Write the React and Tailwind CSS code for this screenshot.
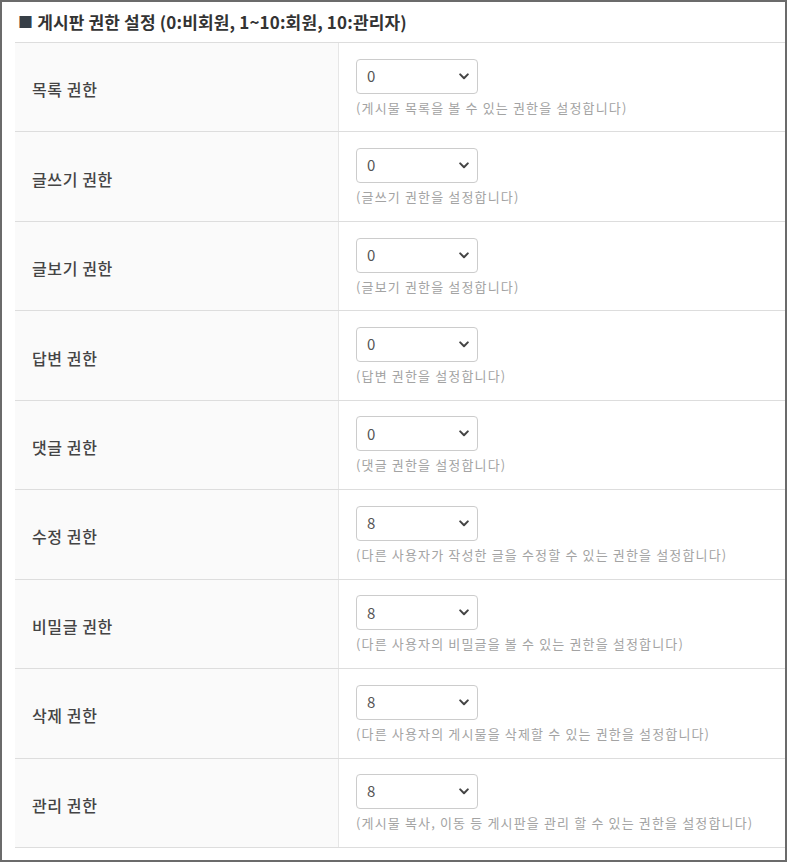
const rows = [
  ["목록 권한", "0", "(게시물 목록을 볼 수 있는 권한을 설정합니다)"],
  ["글쓰기 권한", "0", "(글쓰기 권한을 설정합니다)"],
  ["글보기 권한", "0", "(글보기 권한을 설정합니다)"],
  ["답변 권한", "0", "(답변 권한을 설정합니다)"],
  ["댓글 권한", "0", "(댓글 권한을 설정합니다)"],
  ["수정 권한", "8", "(다른 사용자가 작성한 글을 수정할 수 있는 권한을 설정합니다)"],
  ["비밀글 권한", "8", "(다른 사용자의 비밀글을 볼 수 있는 권한을 설정합니다)"],
  ["삭제 권한", "8", "(다른 사용자의 게시물을 삭제할 수 있는 권한을 설정합니다)"],
  ["관리 권한", "8", "(게시물 복사, 이동 등 게시판을 관리 할 수 있는 권한을 설정합니다)"],
];

function Chevron() {
  return (
    <svg width="10" height="7" viewBox="0 0 10 7" className="shrink-0">
      <path d="M1.2 1.4 L5 5.2 L8.8 1.4" fill="none" stroke="#444" strokeWidth="2" strokeLinecap="round" strokeLinejoin="round" />
    </svg>
  );
}

export default function App() {
  return (
    <div
      className="w-[787px] h-[862px] border-2 border-[#6b6b6b] bg-white box-border overflow-hidden"
      style={{ fontFamily: '"Noto Sans CJK KR", "Noto Sans", sans-serif' }}
    >
      <div className="pl-[13px]">
        <div className="h-[40px] flex items-center text-[17px] font-bold text-[#333] pl-[3px] tracking-[0.15px]">
          <span className="text-[#373f47] mr-[4px] text-[15px]">■</span>
          <span>게시판 권한 설정 (0:비회원, 1~10:회원, 10:관리자)</span>
        </div>
        <div className="border-t border-[#dddddd]">
          {rows.map(([label, val, help], i) => (
            <div key={i} className="flex h-[89.45px] border-b border-[#dddddd] box-border">
              <div className="w-[324px] shrink-0 bg-[#fafafa] border-r border-[#e6e6e6] flex items-center pl-[17px] pt-[4px] text-[16px] tracking-[0.6px] text-[#444] font-medium">
                {label}
              </div>
              <div className="flex-1 flex flex-col justify-center pl-[17px] pt-[1px]">
                <div className="w-[122px] h-[35px] border border-[#cccccc] rounded-[4px] bg-white flex items-center justify-between pl-[10px] pr-[8px] text-[15px] text-[#555]">
                  <span>{val}</span>
                  <Chevron />
                </div>
                <div className="mt-[4px] text-[13px] leading-[19px] text-[#a3a3a3] tracking-[1.15px]">{help}</div>
              </div>
            </div>
          ))}
        </div>
      </div>
    </div>
  );
}
